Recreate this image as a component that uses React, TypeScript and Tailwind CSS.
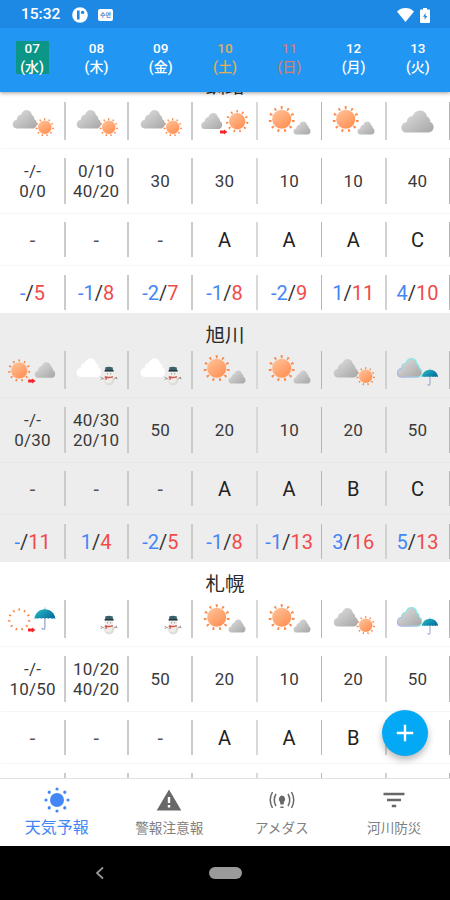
import React from "react";

const FONT = "font-[Roboto,'Noto_Sans_CJK_JP',sans-serif]";

type Box = { x: number; y: number; s: number };

function Defs() {
  return (
    <svg width="0" height="0" className="absolute">
      <defs>
        <linearGradient id="cloud" x1="0" y1="0" x2="1" y2="1">
          <stop offset="0.1" stopColor="#dadada" />
          <stop offset="1" stopColor="#a6a6a6" />
        </linearGradient>
        <linearGradient id="sun" x1="0.1" y1="0" x2="0.8" y2="1">
          <stop offset="0" stopColor="#ffc398" />
          <stop offset="1" stopColor="#ff8e52" />
        </linearGradient>
        <linearGradient id="umb" x1="0" y1="0" x2="1" y2="0.6">
          <stop offset="0" stopColor="#27bfc4" />
          <stop offset="1" stopColor="#0a6fa0" />
        </linearGradient>
        <linearGradient id="rim" x1="0" y1="1" x2="1" y2="0">
          <stop offset="0" stopColor="#b9a6e6" />
          <stop offset="0.5" stopColor="#8fe3ea" />
          <stop offset="1" stopColor="#7ce8e0" />
        </linearGradient>
      </defs>
    </svg>
  );
}

/* Cloud is drawn in a 25 x 19 box whose corner is (x, y). */
function Cloud({ x, y, s, sy, fill = "url(#cloud)", rim }: Box & { sy?: number; fill?: string; rim?: boolean }) {
  return (
    <path
      transform={`translate(${x} ${y}) scale(${s} ${sy ?? s})`}
      d="M4 19C1.6 19 0 17.2 0 14.8C0 12.3 1.8 10.4 4.2 10C4.2 7.2 5.8 5 8.6 4.7C9.6 1.8 11.8 0 14.3 0C17.4 0 19.4 2.2 19.8 5.2C21.6 6 22.3 7.6 22.3 9.6C24 10.5 25 12.2 25 14.3C25 17 23.2 19 20.8 19Z"
      fill={fill}
      stroke={rim ? "url(#rim)" : "none"}
      strokeWidth={rim ? 1.2 : 0}
    />
  );
}

function Sun({ x, y, s, fill = "url(#sun)" }: Box & { fill?: string }) {
  const rays = Array.from({ length: 11 }, (_, i) => i * (360 / 11));
  return (
    <g transform={`translate(${x} ${y}) scale(${s})`}>
      {rays.map((a) => (
        <path key={a} d="M-1.1 -12L1.1 -12L0.6 -9.4L-0.6 -9.4Z" fill="#fb8746" transform={`rotate(${a})`} />
      ))}
      <circle r="8.8" fill={fill} />
    </g>
  );
}

function Umbrella({ x, y, s }: Box) {
  return (
    <g transform={`translate(${x} ${y}) scale(${s})`}>
      <path d="M10.5 9V20Q10.5 22 8.8 21.8Q7.6 21.6 7.6 20.2" fill="none" stroke="#8795c0" strokeWidth="1.1" />
      <path d="M10.5 0V3" stroke="#8fc6d8" strokeWidth="1" />
      <path d="M0 11.5C0.5 5.6 5 1.8 10.5 1.8S20.5 5.6 21 11.5Q19.2 9.9 17.5 11.3Q15.7 9.9 14 11.3Q12.2 9.9 10.5 11.3Q8.7 9.9 7 11.3Q5.2 9.9 3.5 11.3Q1.8 9.9 0 11.5Z" fill="url(#umb)" />
    </g>
  );
}

function Snowman() {
  return (
    <g transform="translate(36 15)">
      <path d="M4.5 13.4L0.6 11.2M1.8 13L0.7 13.6M13.5 13.4L17 11M15.5 12L17.4 12.8" stroke="#8a8580" strokeWidth="0.9" fill="none" />
      <circle cx="9.2" cy="14" r="5.2" fill="#dddcd8" />
      <circle cx="8.4" cy="13.4" r="3.8" fill="#eeedea" />
      <circle cx="9" cy="7.6" r="4.2" fill="#f0efec" />
      <path d="M5 5L5.4 1.2Q9 0.2 12.8 1.4L13 5Z" fill="#3c6068" />
      <path d="M4.6 4.8H13.6" stroke="#223b44" strokeWidth="1.6" />
      <path d="M4.8 10.8Q9 12.4 12.8 10.6M6.4 11.4L5.8 13.8" stroke="#d9534b" strokeWidth="1.5" fill="none" />
      <circle cx="7.6" cy="7.8" r="0.5" fill="#555" />
      <circle cx="10.6" cy="7.8" r="0.5" fill="#555" />
    </g>
  );
}

function Arrow({ x, y }: { x: number; y: number }) {
  return <path transform={`translate(${x} ${y})`} d="M0 -1.4H4V-2.6L7.4 0L4 2.6V1.4H0Z" fill="#f0262c" />;
}

type Kind = "cloudSun" | "cloudToSun" | "sunCloud" | "cloud" | "sunToCloud" | "cloudSnow" | "cloudRain" | "sunToRain";

function Weather({ kind, plain }: { kind: Kind; plain: boolean }) {
  return (
    <svg width="64" height="38" viewBox="0 0 64 38" className="-ml-px block shrink-0">
      {kind === "cloudSun" && (<><Cloud x={12.7} y={8} s={0.97} /><Sun x={44.7} y={25.3} s={0.76} /></>)}
      {kind === "cloudToSun" && (<><Cloud x={9.2} y={11} s={0.84} /><Sun x={45.2} y={19.3} s={0.93} /><Arrow x={28} y={30} /></>)}
      {kind === "sunCloud" && (<><Sun x={24.7} y={17.3} s={1.08} /><Cloud x={36.5} y={19.5} s={0.68} /></>)}
      {kind === "cloud" && <Cloud x={16.4} y={8.5} s={1.29} sy={1.16} />}
      {kind === "sunToCloud" && (<><Sun x={19.2} y={19.5} s={0.92} /><Cloud x={34.7} y={11.2} s={0.82} /><Arrow x={28.2} y={30} /></>)}
      {kind === "cloudSnow" && (<><Cloud x={12.5} y={7.2} s={0.99} fill="#ffffff" /><Snowman /></>)}
      {kind === "cloudRain" && (<><Cloud x={12.5} y={7.7} s={0.97} rim /><Umbrella x={36.8} y={17.3} s={0.78} /></>)}
      {kind === "sunToRain" && (<><Sun x={19.2} y={19.5} s={0.92} fill={plain ? "#ffffff" : "url(#sun)"} /><Umbrella x={34.4} y={7.5} s={1} /><Arrow x={28} y={30} /></>)}
    </svg>
  );
}

const dividers = [
  "border-r-2 -mr-px border-[#cbcbcb]",
  "border-r-2 border-[#cbcbcb]",
  "border-r-2 border-[#cbcbcb]",
  "border-r-2 border-[#d8d8d8]",
  "border-r border-[#b6b6b6]",
  "border-r-2 -mr-px border-[#d2d2d2]",
  "border-r border-[#b6b6b6]",
];

function Row({ height, pad, faint, children }: { height: string; pad: string; faint: string; children: React.ReactNode[] }) {
  return (
    <div className={`ml-px grid grid-cols-7 ${height} ${pad} ${faint}`}>
      {children.map((c, i) => (
        <div key={i} className={`flex min-w-0 items-center justify-center ${dividers[i]}`}>
          {c}
        </div>
      ))}
    </div>
  );
}

type City = { name: string; icons: Kind[]; rain: string[]; rel: string[]; temp: [string, string][]; gray?: boolean };

const cities: City[] = [
  {
    name: "釧路",
    icons: ["cloudSun", "cloudSun", "cloudSun", "cloudToSun", "sunCloud", "sunCloud", "cloud"],
    rain: ["-/-\n0/0", "0/10\n40/20", "30", "30", "10", "10", "40"],
    rel: ["-", "-", "-", "A", "A", "A", "C"],
    temp: [["-", "5"], ["-1", "8"], ["-2", "7"], ["-1", "8"], ["-2", "9"], ["1", "11"], ["4", "10"]],
  },
  {
    name: "旭川",
    gray: true,
    icons: ["sunToCloud", "cloudSnow", "cloudSnow", "sunCloud", "sunCloud", "cloudSun", "cloudRain"],
    rain: ["-/-\n0/30", "40/30\n20/10", "50", "20", "10", "20", "50"],
    rel: ["-", "-", "-", "A", "A", "B", "C"],
    temp: [["-", "11"], ["1", "4"], ["-2", "5"], ["-1", "8"], ["-1", "13"], ["3", "16"], ["5", "13"]],
  },
  {
    name: "札幌",
    icons: ["sunToRain", "cloudSnow", "cloudSnow", "sunCloud", "sunCloud", "cloudSun", "cloudRain"],
    rain: ["-/-\n10/50", "10/20\n40/20", "50", "20", "10", "20", "50"],
    rel: ["-", "-", "-", "A", "A", "B", "C"],
    temp: [],
  },
];

function CityBlock({ city }: { city: City }) {
  const faint = city.gray ? "border-b border-b-[#e7e7e7]" : "border-b border-b-[#f6f6f6]";
  const temps = city.temp.length ? city.temp : Array.from({ length: 7 }, () => null);
  return (
    <section className={`h-[249px] shrink-0 ${city.gray ? "bg-[#ededed]" : "bg-white"}`}>
      <h2 className="flex h-[38px] items-center justify-center pt-[8px] text-[19.5px] leading-none text-[#2a2a2a]">{city.name}</h2>
      <Row height="h-[47px]" pad="pb-[9px]" faint={faint}>
        {city.icons.map((k, i) => <Weather key={i} kind={k} plain={!city.gray} />)}
      </Row>
      <Row height="h-[65px]" pad="pt-[9px] pb-[9px]" faint={faint}>
        {city.rain.map((r, i) => (
          <span key={i} className="whitespace-pre text-center text-[17px] leading-[20.5px] tracking-[0.2px] text-[#3a3a3a]">{r}</span>
        ))}
      </Row>
      <Row height="h-[52px]" pad="pt-2 pb-2" faint={faint}>
        {city.rel.map((r, i) => (
          <span key={i} className={`text-[20px] leading-none ${r === "-" ? "text-[#555]" : "text-[#222]"}`}>{r}</span>
        ))}
      </Row>
      <Row height="h-[47px]" pad="pt-[9px] pb-[3px]" faint="">
        {temps.map((t, i) =>
          t ? (
            <span key={i} className="whitespace-nowrap text-[20px] leading-none text-[#333]">
              <span className="text-[#4586f5]">{t[0]}</span>/<span className="text-[#f04b4b]">{t[1]}</span>
            </span>
          ) : null,
        )}
      </Row>
    </section>
  );
}

const days = [
  ["07", "(水)", "text-white"],
  ["08", "(木)", "text-white"],
  ["09", "(金)", "text-white"],
  ["10", "(土)", "text-[#e2ad62]"],
  ["11", "(日)", "text-[#d97b72]"],
  ["12", "(月)", "text-white"],
  ["13", "(火)", "text-white"],
];

function StatusBar() {
  return (
    <div className="flex h-7 items-center bg-[#1e88e5] pl-[21px] pr-5 pt-[2px] text-white">
      <span className="w-[38px] text-[15.5px] font-medium leading-none">15:32</span>
      <svg width="16" height="16" viewBox="0 0 16 16" className="ml-[13px]">
        <circle cx="8" cy="8" r="7.8" fill="#fff" />
        <path d="M5 3.5H7.6V12.5H5Z" fill="#1e88e5" />
        <circle cx="10.6" cy="5.4" r="1.7" fill="#1e88e5" />
      </svg>
      <span className="ml-[10px] flex h-[12px] w-[15px] items-center justify-center rounded-[2px] bg-white text-[6px] font-bold leading-none text-[#5b93cf]">수면</span>
      <svg width="17" height="14" viewBox="0 0 17 14" className="ml-auto">
        <path d="M8.5 14L0 3.4Q3.6 0 8.5 0T17 3.4Z" fill="#fff" />
      </svg>
      <svg width="10" height="15" viewBox="0 0 10 15" className="ml-[6px]">
        <path d="M3 0H7V1.6H9Q10 1.6 10 2.6V14Q10 15 9 15H1Q0 15 0 14V2.6Q0 1.6 1 1.6H3Z" fill="#fff" />
        <path d="M5.6 5L3 8.8H4.6V11.8L7.2 8H5.6Z" fill="#1e88e5" />
      </svg>
    </div>
  );
}

function Tab({ label, active, children }: { label: string; active?: boolean; children: React.ReactNode }) {
  return (
    <div className={`flex flex-1 flex-col items-center ${active ? "text-[#4287f5]" : "text-[#808080]"}`}>
      <div className="flex h-[42px] items-center justify-center pl-px">{children}</div>
      <span className={`-mt-px pl-px leading-[16px] ${active ? "text-[16px]" : "text-[13.6px]"}`}>{label}</span>
    </div>
  );
}

export default function App() {
  return (
    <div className={`flex h-[900px] w-[450px] flex-col overflow-hidden bg-white ${FONT}`}>
      <Defs />
      <header className="relative z-10 shrink-0 shadow-[0_1px_4px_rgba(0,0,0,0.4)]">
        <StatusBar />
        <div className="grid h-16 grid-cols-7 bg-[#2196f3]">
          {days.map(([d, w, c], i) => (
            <div key={d} className="flex items-start justify-center pt-[13px]">
              <div className={`flex h-[33px] w-[33px] flex-col items-center text-[14px] font-medium ${c} ${i === 0 ? "bg-[#0b9688]" : ""}`}>
                <span className="mt-[-1px] text-[13.5px] leading-[16px]">{d}</span>
                <span className="mt-px whitespace-nowrap leading-[20px]">{w}</span>
              </div>
            </div>
          ))}
        </div>
      </header>
      <main className="relative flex h-[686px] shrink-0 flex-col overflow-hidden">
        <div className="-mt-[28px] flex flex-col">
          {cities.map((c) => <CityBlock key={c.name} city={c} />)}
        </div>
        <button aria-label="追加" className="absolute left-[382px] top-[618px] flex h-[46px] w-[46px] items-center justify-center rounded-full bg-[#03a9f4] shadow-[0_4px_7px_rgba(0,0,0,0.28)]">
          <svg width="18" height="18" viewBox="0 0 18 18"><path d="M9 0.8V17.2M0.8 9H17.2" stroke="#fff" strokeWidth="2.4" /></svg>
        </button>
      </main>
      <nav className="flex h-[68px] shrink-0 border-t border-[#dde3e3] bg-white">
        <Tab label="天気予報" active>
          <svg width="26" height="26" viewBox="-13 -13 26 26" fill="currentColor">
            <circle r="7" />
            {[0, 45, 90, 135, 180, 225, 270, 315].map((a) => <circle key={a} cy="-11" r="1.6" transform={`rotate(${a})`} />)}
          </svg>
        </Tab>
        <Tab label="警報注意報">
          <svg width="26" height="22" viewBox="0 0 26 22"><path d="M13 0.5L25.3 21.5H0.7Z" fill="#686868" /><path d="M13 8V14M13 16V18.6" stroke="#fff" strokeWidth="2.4" /></svg>
        </Tab>
        <Tab label="アメダス">
          <svg width="26" height="20" viewBox="-13 -10 26 20" fill="none" stroke="#686868" strokeWidth="1.5">
            <path d="M-6 -6Q-9.5 0 -6 6M-9.5 -8Q-14 0 -9.5 8M6 -6Q9.5 0 6 6M9.5 -8Q14 0 9.5 8" />
            <path d="M0 -4.4A3.7 3.7 0 0 1 2 2L1.6 4.6H-1.6L-2 2A3.7 3.7 0 0 1 0 -4.4Z" fill="#686868" stroke="none" />
            <path d="M-1.6 7.3H1.6" />
          </svg>
        </Tab>
        <Tab label="河川防災">
          <svg width="22" height="16" viewBox="0 0 22 16"><path d="M0.5 2H21.5M4 8H18M8.8 14H13.2" stroke="#686868" strokeWidth="2.3" /></svg>
        </Tab>
      </nav>
      <div className="flex flex-1 items-center bg-black">
        <svg width="10" height="14" viewBox="0 0 10 14" className="ml-[95px]"><path d="M8 1.5L2 7L8 12.5" fill="none" stroke="#999" strokeWidth="1.7" /></svg>
        <span className="ml-[104px] h-3 w-[33px] rounded-full bg-[#9a9a9a]" />
      </div>
    </div>
  );
}
